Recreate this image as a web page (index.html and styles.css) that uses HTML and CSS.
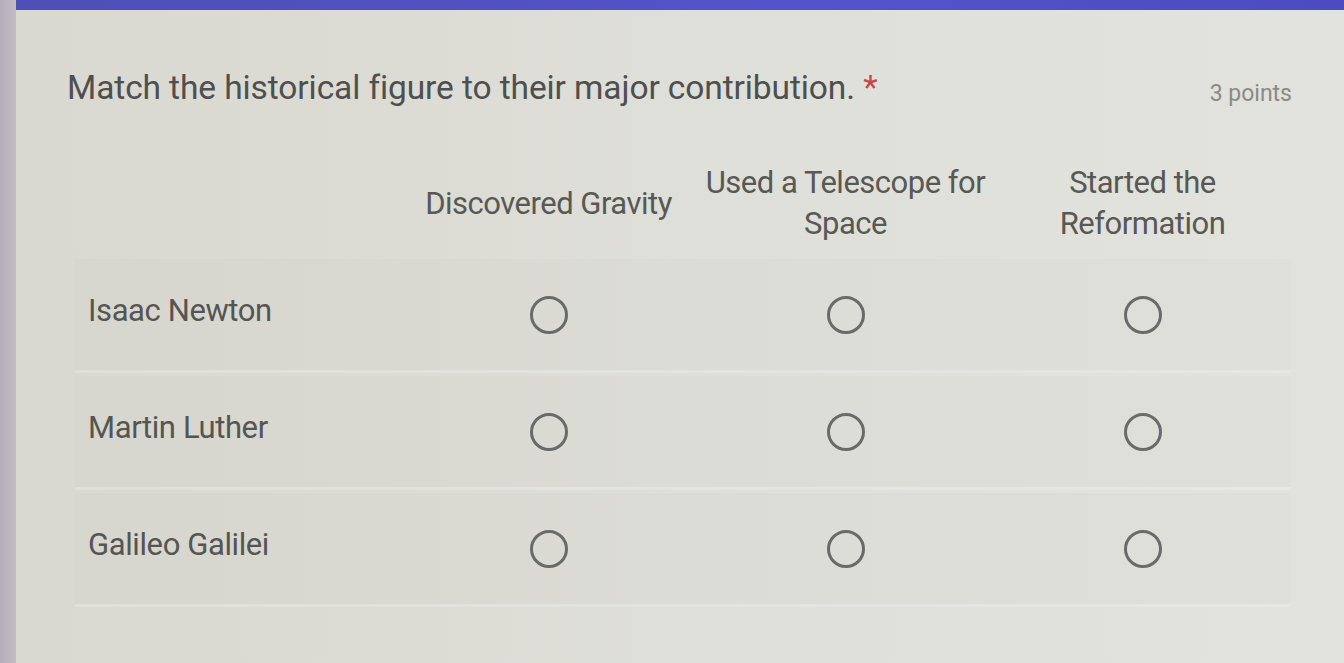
FILE: index.html
```html
<!DOCTYPE html>
<html>
<head>
<meta charset="utf-8">
<link rel="stylesheet" href="styles.css">
</head>
<body>
<div class="page">
  <div class="side"></div>
  <div class="card">
    <div class="topbar"></div>
    <div class="head">
      <div class="title">Match the historical figure to their major contribution. <span class="req">*</span></div>
      <div class="points">3 points</div>
    </div>
    <div class="grid">
      <div class="hrow">
        <div class="lab"></div>
        <div class="col">Discovered Gravity</div>
        <div class="col">Used a Telescope for<br>Space</div>
        <div class="col">Started the<br>Reformation</div>
      </div>
      <div class="row">
        <div class="lab">Isaac Newton</div>
        <div class="col"><span class="radio"></span></div>
        <div class="col"><span class="radio"></span></div>
        <div class="col"><span class="radio"></span></div>
      </div>
      <div class="row">
        <div class="lab">Martin Luther</div>
        <div class="col"><span class="radio"></span></div>
        <div class="col"><span class="radio"></span></div>
        <div class="col"><span class="radio"></span></div>
      </div>
      <div class="row">
        <div class="lab">Galileo Galilei</div>
        <div class="col"><span class="radio"></span></div>
        <div class="col"><span class="radio"></span></div>
        <div class="col"><span class="radio"></span></div>
      </div>
    </div>
  </div>
</div>
</body>
</html>
```
FILE: styles.css
```css
html, body {
  margin: 0;
  padding: 0;
  height: 100%;
  overflow: hidden;
}
body {
  font-family: Roboto, "Liberation Sans", sans-serif;
  background: #bdb7c2;
}
.page {
  display: flex;
  height: 663px;
}
.side {
  width: 16px;
  flex: none;
  background: linear-gradient(90deg, #b4aebb, #c2bcc6);
}
.card {
  flex: 1;
  background: linear-gradient(90deg, #d9d8d1 0%, #dedfd8 50%, #e2e3dc 100%);
  display: flex;
  flex-direction: column;
}
.topbar {
  height: 10px;
  background: linear-gradient(90deg, #4f4fb6, #5353cc 60%, #4c4cc0);
}
.head {
  display: flex;
  justify-content: space-between;
  align-items: baseline;
  padding: 58px 52px 0 51px;
  height: 44px;
}
.title {
  font-size: 33.5px;
  color: #4f4f4f;
  letter-spacing: -0.1px;
}
.req {
  color: #c5484a;
}
.points {
  font-size: 23px;
  color: #8a8a86;
  position: relative;
  top: 2px;
}
.grid {
  margin: 41px 53px 0 59px;
  display: flex;
  flex-direction: column;
  gap: 6px;
}
.hrow, .row {
  display: grid;
  grid-template-columns: 325px 297px 297px 297px;
  align-items: center;
}
.hrow {
  height: 100px;
}
.row {
  height: 111px;
  background: rgba(0, 0, 0, 0.012);
  box-shadow: 0 3px 0 rgba(255, 255, 255, 0.18);
}
.lab {
  padding-left: 13px;
  font-size: 31px;
  color: #555552;
  letter-spacing: -0.4px;
  margin-top: -8px;
}
.col {
  text-align: center;
  font-size: 31px;
  line-height: 41px;
  color: #585855;
  letter-spacing: -0.5px;
  display: flex;
  justify-content: center;
}
.hrow .col {
  display: block;
}
.radio {
  width: 38px;
  height: 38px;
  box-sizing: border-box;
  border: 3px solid #6a6a68;
  border-radius: 50%;
  display: block;
}
```
